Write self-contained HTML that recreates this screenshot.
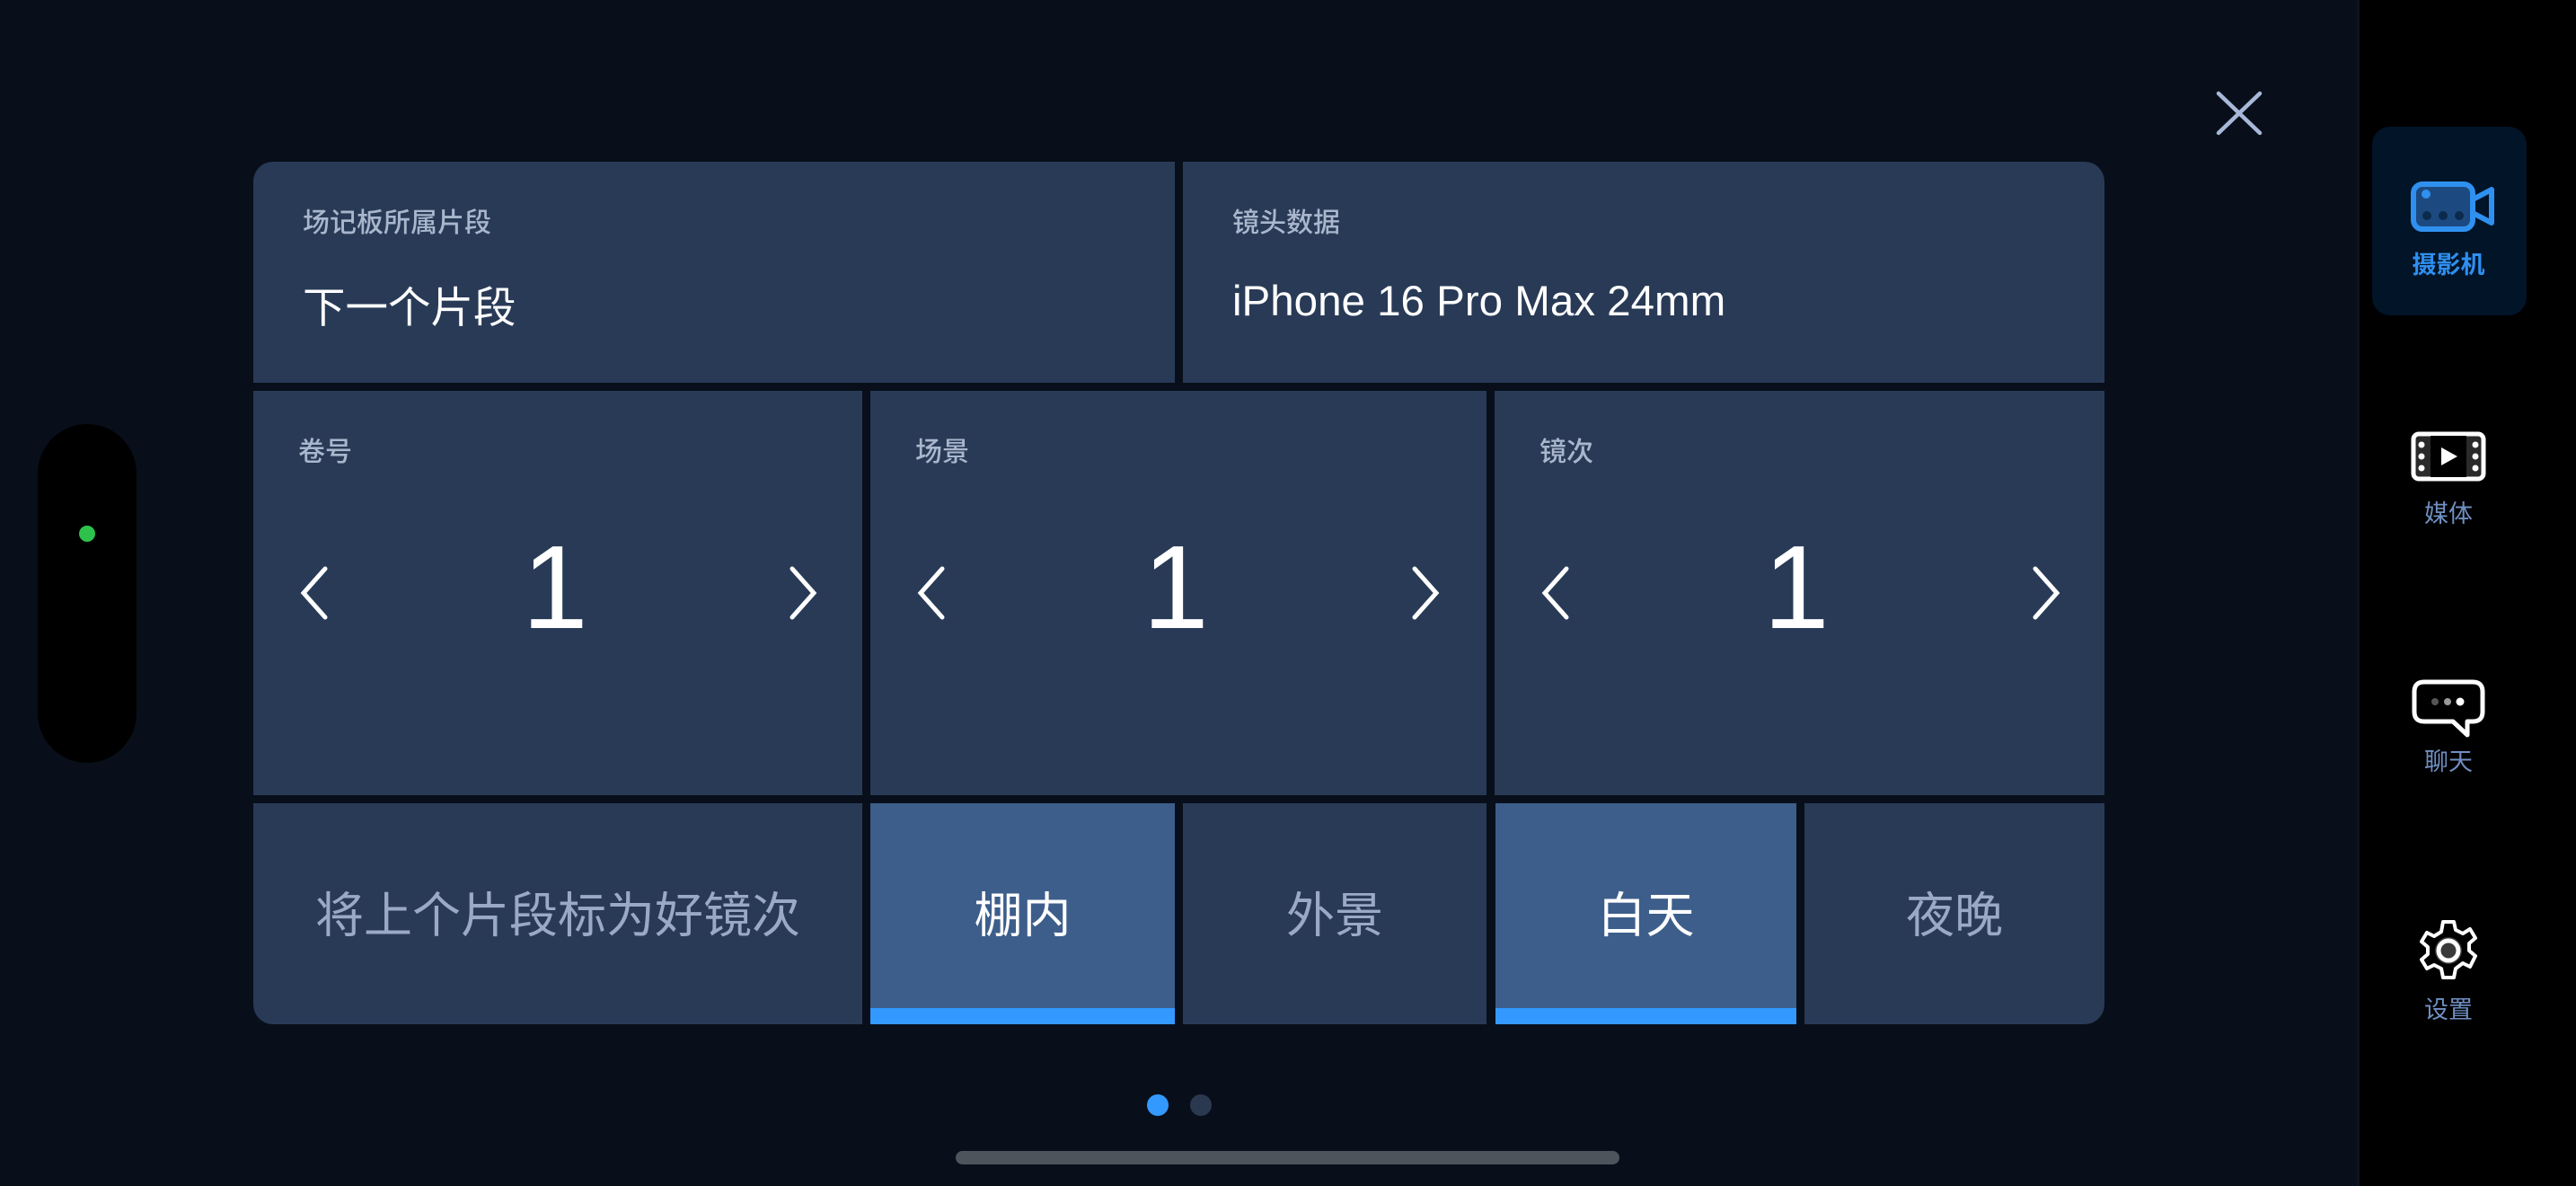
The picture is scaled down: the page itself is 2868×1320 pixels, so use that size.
<!DOCTYPE html>
<html><head><meta charset="utf-8"><style>
*{margin:0;padding:0;box-sizing:border-box}
body{width:2868px;height:1320px;background:#080f1a;position:relative;overflow:hidden;font-family:"Liberation Sans","Noto Sans CJK SC",sans-serif}
.c{position:absolute;background:#283a56}
.lbl{position:absolute;color:#a9b6cc;font-size:30px;font-weight:500}
.val{position:absolute;color:#fff;font-size:47.5px}
.big{position:absolute;color:#fff;font-size:132px;font-weight:300;width:200px;text-align:center;line-height:1}
.t{position:absolute;left:0;right:0;text-align:center;font-size:54px;color:#9aaac6;top:50%;transform:translateY(calc(-50% - 3px))}
.sel{background:#3d5e8b}
.sel .t{color:#fff}
.sel::after{content:"";position:absolute;left:0;right:0;bottom:0;height:18px;background:#3399ff}
.sb{position:absolute;left:2624px;top:0;width:244px;height:1320px;background:#000;border-left:3px solid #0c1420}
.sl{position:absolute;left:0;width:198px;text-align:center;font-size:27px;color:#6f8fc2}
svg{position:absolute}
</style></head><body>
<div style="position:absolute;left:42px;top:472px;width:110px;height:377px;border-radius:55px;background:#000"></div>
<div style="position:absolute;left:88px;top:585px;width:18px;height:18px;border-radius:50%;background:#2ec24c"></div>
<svg style="left:2460px;top:94px" width="66" height="64"><path d="M10 10L56 54M56 10L10 54" stroke="#a8b8d8" stroke-width="4.5" stroke-linecap="round"/></svg>

<div class="c" style="left:282px;top:180px;width:1026px;height:246px;border-top-left-radius:22px">
 <div class="lbl" style="left:55px;top:43px">场记板所属片段</div>
 <div class="val" style="left:55px;top:124px">下一个片段</div>
</div>
<div class="c" style="left:1317px;top:180px;width:1026px;height:246px;border-top-right-radius:22px">
 <div class="lbl" style="left:55px;top:43px">镜头数据</div>
 <div class="val" style="left:55px;top:128px">iPhone 16 Pro Max 24mm</div>
</div>

<div class="c" style="left:282px;top:435px;width:678px;height:450px">
 <div class="lbl" style="left:50px;top:43px">卷号</div>
 <svg style="left:44px;top:190px" width="50" height="70"><path d="M36 8L12 35L36 62" fill="none" stroke="#fff" stroke-width="5" stroke-linecap="round"/></svg>
 <div class="big" style="left:236px;top:153px">1</div>
 <svg style="left:588px;top:190px" width="50" height="70"><path d="M12 8L36 35L12 62" fill="none" stroke="#fff" stroke-width="5" stroke-linecap="round"/></svg>
</div>
<div class="c" style="left:969px;top:435px;width:686px;height:450px">
 <div class="lbl" style="left:50px;top:43px">场景</div>
 <svg style="left:44px;top:190px" width="50" height="70"><path d="M36 8L12 35L36 62" fill="none" stroke="#fff" stroke-width="5" stroke-linecap="round"/></svg>
 <div class="big" style="left:240px;top:153px">1</div>
 <svg style="left:594px;top:190px" width="50" height="70"><path d="M12 8L36 35L12 62" fill="none" stroke="#fff" stroke-width="5" stroke-linecap="round"/></svg>
</div>
<div class="c" style="left:1664px;top:435px;width:679px;height:450px">
 <div class="lbl" style="left:50px;top:43px">镜次</div>
 <svg style="left:44px;top:190px" width="50" height="70"><path d="M36 8L12 35L36 62" fill="none" stroke="#fff" stroke-width="5" stroke-linecap="round"/></svg>
 <div class="big" style="left:236px;top:153px">1</div>
 <svg style="left:590px;top:190px" width="50" height="70"><path d="M12 8L36 35L12 62" fill="none" stroke="#fff" stroke-width="5" stroke-linecap="round"/></svg>
</div>

<div class="c" style="left:282px;top:894px;width:678px;height:246px;border-bottom-left-radius:22px"><div class="t">将上个片段标为好镜次</div></div>
<div class="c sel" style="left:969px;top:894px;width:339px;height:246px"><div class="t">棚内</div></div>
<div class="c" style="left:1317px;top:894px;width:338px;height:246px"><div class="t">外景</div></div>
<div class="c sel" style="left:1665px;top:894px;width:335px;height:246px"><div class="t">白天</div></div>
<div class="c" style="left:2009px;top:894px;width:334px;height:246px;border-bottom-right-radius:22px"><div class="t">夜晚</div></div>

<div style="position:absolute;left:1277px;top:1218px;width:24px;height:24px;border-radius:50%;background:#3399ff"></div>
<div style="position:absolute;left:1325px;top:1218px;width:24px;height:24px;border-radius:50%;background:#2a3850"></div>
<div style="position:absolute;left:1064px;top:1281px;width:739px;height:15px;border-radius:8px;background:#4e545c"></div>

<div class="sb">
 <div style="position:absolute;left:14px;top:141px;width:172px;height:210px;border-radius:20px;background:#011428"></div>
 <svg style="left:52px;top:200px" width="100" height="66"><rect x="8" y="5" width="66" height="50" rx="10" fill="#1c4a80" stroke="#2f90ef" stroke-width="6"/><path d="M74 22L95 11V48L74 37Z" fill="none" stroke="#2f90ef" stroke-width="6" stroke-linejoin="round"/><circle cx="22" cy="16" r="5" fill="#2f90ef"/><circle cx="23" cy="40" r="5" fill="#0b2a4c"/><circle cx="41" cy="40" r="5" fill="#0b2a4c"/><circle cx="59" cy="40" r="5" fill="#0b2a4c"/></svg>
 <div class="sl" style="top:273px;color:#2f8ff0;font-weight:bold">摄影机</div>
 <svg style="left:57px;top:480px" width="84" height="56"><rect x="3" y="3" width="78" height="50" rx="6" fill="#2a2a2a" stroke="#fff" stroke-width="5"/><rect x="22" y="5" width="40" height="46" fill="#000"/><path d="M34 18L52 28L34 38Z" fill="#fff"/><g fill="#fff"><circle cx="12" cy="15" r="3.5"/><circle cx="12" cy="28" r="3.5"/><circle cx="12" cy="41" r="3.5"/><circle cx="72" cy="15" r="3.5"/><circle cx="72" cy="28" r="3.5"/><circle cx="72" cy="41" r="3.5"/></g></svg>
 <div class="sl" style="top:550px">媒体</div>
 <svg style="left:58px;top:756px" width="82" height="70"><path d="M14 3H68Q79 3 79 14V36Q79 47 68 47H62V62L46 47H14Q3 47 3 36V14Q3 3 14 3Z" fill="#000" stroke="#fff" stroke-width="5" stroke-linejoin="round"/><circle cx="26" cy="25" r="4" fill="#555"/><circle cx="40" cy="25" r="4" fill="#999"/><circle cx="54" cy="25" r="4.5" fill="#fff"/></svg>
 <div class="sl" style="top:826px">聊天</div>
 <svg style="left:63px;top:1022px" width="72" height="72" viewBox="0 0 72 72"><path d="M30 4H42L44 13L52 17L60 12L66 22L59 28L59 36L66 42L60 54L52 50L44 56L42 66H30L28 56L20 52L12 56L6 46L13 40V32L6 26L12 16L20 20L28 15Z" fill="#000" stroke="#fff" stroke-width="4" stroke-linejoin="round"/><circle cx="36" cy="36" r="15" fill="#3a3a3a"/><circle cx="36" cy="36" r="11" fill="none" stroke="#fff" stroke-width="5"/></svg>
 <div class="sl" style="top:1102px">设置</div>
</div>
</body></html>
